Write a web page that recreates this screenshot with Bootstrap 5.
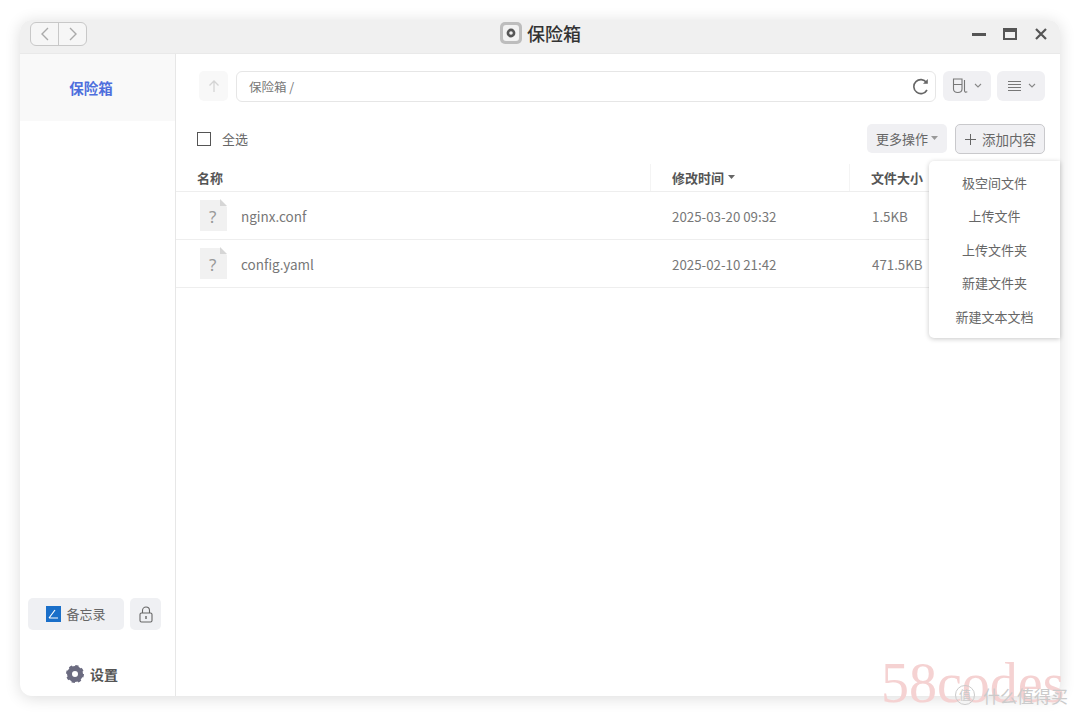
<!DOCTYPE html>
<html lang="zh">
<head>
<meta charset="utf-8">
<title>保险箱</title>
<link rel="stylesheet" href="https://cdn.jsdelivr.net/npm/bootstrap@5.3.0/dist/css/bootstrap.min.css">
<style>
html,body{height:100%;margin:0;background:#fff;overflow:hidden}
body{font-family:"Noto Sans CJK SC","Noto Sans",sans-serif;font-size:13px;color:#666;padding:20px}
.win{width:1040px;height:676px;border-radius:12px;background:#fff;box-shadow:0 2px 16px rgba(0,0,0,.14);position:relative}
.tbar{height:34px;background:#f0f0f0;border-radius:12px 12px 0 0;border-bottom:1px solid #e9e9e9;padding:0 11px 6px 10px}
.navpair{width:57px;height:24px;border:1px solid #c8c8c8;border-radius:6px;background:#f6f6f6}
.navpair>span{flex:1 1 0}
.navpair>span+span{border-left:1px solid #c8c8c8}
.ttl{position:absolute;left:480px;top:1px;height:24px;font-size:18px;font-weight:500;color:#333;gap:5px;line-height:22px}
.ctrls{gap:17px;padding-right:1px}
.mainrow{height:642px}
.side{width:156px;border-right:1px solid #e7e7e7;border-radius:0 0 0 12px}
.sactive{height:67px;background:#f9f9f9;color:#4e6fdd;font-size:14.500px;font-weight:700;padding-right:13px}
.memo{width:96px;height:32px;background:#eff0f3;border-radius:5px;gap:5px;color:#666;font-size:13px}
.lockb{width:31px;height:32px;background:#eff0f3;border-radius:5px}
.memorow{gap:6px;padding:0 8px 24px}
.sfoot{height:42px;gap:6px;font-weight:700;color:#555;font-size:14px;padding-right:11px;padding-bottom:2px}
.tool1{padding:17px 15px 0 23px;gap:8px;height:49px}
.upb{width:29px;height:30px;background:#f8f8f8;border-radius:5px}
.pathb{height:31px;border:1px solid #e6e6e6;border-radius:6px;padding:0 6px 0 12px;color:#777;font-size:12.500px;margin-right:-1px}
.pathtxt{padding-top:2px}
.vbtn{width:48px;height:30px;background:#f0f0f3;border-radius:6px;gap:6px}
.vbtn+.vbtn{margin-left:-2px}
.tool2{height:34px;padding:21px 15px 0 21px;box-sizing:content-box}
.selall{height:29px}
.chk{width:14px;height:14px;border:1.200px solid #555;margin-right:11px;margin-top:1px}
.act1{width:80px;height:29px;background:#f0f0f3;border-radius:5px;font-size:13px;color:#666;margin-right:8px;gap:3px}
.act2{width:90px;height:30px;background:#f0f0f3;border:1px solid #c9c9cc;border-radius:5px;font-size:13.500px;color:#666;gap:5px}
.thead{height:23px;font-size:13px;font-weight:700;color:#555;border-bottom:1px solid #eee;margin-top:11px}
.thead>div{height:27px;display:flex;align-items:center;flex:none}
.thead>.c2{width:199px}
.frow{height:48px;border-bottom:1px solid #eee;color:#777;font-size:13.500px}
.c1{width:474px;padding-left:21px}
.c2{width:200px;padding-left:22px}
.c3{padding-left:22px}
.thead>.sep{border-left:1px solid #f4f4f4;padding-left:21px}
.ftime{font-size:13.300px;padding-top:2px}
.fname{gap:14px}
.fname>span{padding-top:2px}
.fico{margin-top:-2px}
.addmenu{position:absolute;left:909px;top:141px;width:131px;height:177px;background:#fff;border-radius:5px 0 0 5px;box-shadow:0 1px 5px rgba(0,0,0,.22);padding:5px 0 4px;color:#666;font-size:13px}
.addmenu>div{height:33.400px}
.wm58{position:absolute;left:861px;top:635px;font-family:"Liberation Serif",serif;font-size:56px;line-height:1;color:#f5d2d2;white-space:nowrap}
.wmz{position:absolute;left:935px;top:665px;font-size:17px;line-height:1;color:#cbcbcb;white-space:nowrap;gap:8px}
.wmc{width:20px;height:20px;border:1px solid #cbcbcb;border-radius:50%;font-size:12px}
</style>
</head>
<body>
<div class="win">
  <div class="tbar d-flex align-items-center justify-content-between">
    <div class="navpair d-flex">
      <span class="d-flex align-items-center justify-content-center"><svg width="10" height="16" viewBox="0 0 10 16"><path d="M8 2 2 8l6 6" fill="none" stroke="#aaa" stroke-width="1.400"/></svg></span>
      <span class="d-flex align-items-center justify-content-center"><svg width="10" height="16" viewBox="0 0 10 16"><path d="m2 2 6 6-6 6" fill="none" stroke="#aaa" stroke-width="1.400"/></svg></span>
    </div>
    <div class="ttl d-flex align-items-center">
      <svg width="22" height="22" viewBox="0 0 22 22"><rect x="0" y="0" width="22" height="22" rx="5" fill="#bdbdbd"/><rect x="3" y="3" width="16" height="16" rx="3" fill="#f2f2f2"/><circle cx="11" cy="11" r="4.400" fill="#555"/><circle cx="11" cy="11" r="1.800" fill="#eee"/></svg>
      <span>保险箱</span>
    </div>
    <div class="ctrls d-flex align-items-center">
      <svg width="14" height="14" viewBox="0 0 14 14"><rect x="0" y="6" width="14" height="3" fill="#555"/></svg>
      <svg width="14" height="14" viewBox="0 0 14 14"><rect x="1" y="2" width="12" height="10" fill="none" stroke="#555" stroke-width="2"/><rect x="1" y="2" width="12" height="3" fill="#555"/></svg>
      <svg width="14" height="14" viewBox="0 0 14 14"><path d="m2 2 10 10M12 2 2 12" stroke="#555" stroke-width="2.200"/></svg>
    </div>
  </div>
  <div class="mainrow d-flex">
    <aside class="side d-flex flex-column">
      <div class="sactive d-flex align-items-center justify-content-center">保险箱</div>
      <div class="flex-grow-1"></div>
      <div class="memorow d-flex">
        <div class="memo d-flex align-items-center justify-content-center">
          <svg width="15" height="16" viewBox="0 0 15 16"><rect width="15" height="16" fill="#1a6fc9"/><path d="M3 12 9 4M3 12h9" stroke="#fff" stroke-width="1.200" fill="none"/></svg>
          <span>备忘录</span>
        </div>
        <div class="lockb d-flex align-items-center justify-content-center">
          <svg width="14" height="17" viewBox="0 0 14 17"><rect x="1" y="7" width="12" height="9" rx="1.500" fill="none" stroke="#666" stroke-width="1.100"/><path d="M3.500 7V4.500a3.500 3.500 0 0 1 7 0V7" fill="none" stroke="#666" stroke-width="1.100"/><rect x="6.300" y="10" width="1.400" height="3" fill="#666"/></svg>
        </div>
      </div>
      <div class="sfoot d-flex align-items-center justify-content-center">
        <svg width="18" height="18" viewBox="0 0 18 18"><circle cx="9" cy="9" r="5.500" fill="none" stroke="#6b6b80" stroke-width="5"/><circle cx="9" cy="9" r="7.800" fill="none" stroke="#6b6b80" stroke-width="2.400" stroke-dasharray="3.200 2.926"/></svg>
        <span>设置</span>
      </div>
    </aside>
    <main class="flex-grow-1 d-flex flex-column">
      <div class="tool1 d-flex align-items-start">
        <div class="upb d-flex align-items-center justify-content-center">
          <svg width="14" height="14" viewBox="0 0 14 14"><path d="M7 13V2M2.500 6.500 7 2l4.500 4.500" fill="none" stroke="#d4d4d4" stroke-width="1.300"/></svg>
        </div>
        <div class="pathb flex-grow-1 d-flex align-items-center justify-content-between">
          <span class="pathtxt">保险箱 /</span>
          <svg width="17" height="17" viewBox="0 0 17 17"><path d="M14.500 4.500A7 7 0 1 0 15 12" fill="none" stroke="#666" stroke-width="1.600"/><path d="M15.800 1v4.800H11z" fill="#666"/></svg>
        </div>
        <div class="vbtn d-flex align-items-center justify-content-center">
          <svg width="16" height="16" viewBox="0 0 16 16"><path d="M1.500 1h8.500V11c0 2.500-1.500 3.500-4.200 3.500S1.500 13.500 1.500 11zM1.500 6.500H10M12.500 2v10.500c0 1.500.8 2 2.800 1.300" fill="none" stroke="#777" stroke-width="1.100"/></svg>
          <svg width="8" height="6" viewBox="0 0 8 6"><path d="m1 1 3 3 3-3" fill="none" stroke="#888" stroke-width="1.100"/></svg>
        </div>
        <div class="vbtn d-flex align-items-center justify-content-center">
          <svg width="15" height="12" viewBox="0 0 15 12"><path d="M1 1.500h13M1 4.500h13M1 7.500h13M1 10.500h13" stroke="#777" stroke-width="1"/></svg>
          <svg width="8" height="6" viewBox="0 0 8 6"><path d="m1 1 3 3 3-3" fill="none" stroke="#888" stroke-width="1.100"/></svg>
        </div>
      </div>
      <div class="tool2 d-flex align-items-start">
        <div class="selall d-flex align-items-center flex-grow-1">
          <span class="chk"></span><span>全选</span>
        </div>
        <div class="act1 d-flex align-items-center justify-content-center">更多操作<svg width="7" height="5" viewBox="0 0 7 5"><path d="M0 0h7L3.500 4z" fill="#999"/></svg></div>
        <div class="act2 d-flex align-items-center justify-content-center">
          <svg width="13" height="13" viewBox="0 0 13 13"><path d="M6.500 1v11M1 6.500h11" stroke="#666" stroke-width="1"/></svg>
          <span>添加内容</span>
        </div>
      </div>
      <div class="thead d-flex align-items-end">
        <div class="c1">名称</div>
        <div class="c2 sep gap-1">修改时间<svg width="7" height="5" viewBox="0 0 7 5"><path d="M0 0h7L3.500 4z" fill="#666"/></svg></div>
        <div class="c3 sep">文件大小</div>
      </div>
      <div class="frow d-flex align-items-center">
        <div class="c1 ps-4 fname d-flex align-items-center">
          <svg class="fico" width="27" height="32" viewBox="0 0 27 32"><path d="M0 1h20l7 7v24H0z" fill="#f1f1f1"/><path d="M20 0l7 7h-7z" fill="#d6d6d6"/><text x="9" y="24" font-size="17" fill="#999" font-family="Noto Sans">?</text></svg>
          <span>nginx.conf</span>
        </div>
        <div class="c2 ftime">2025-03-20 09:32</div>
        <div class="c3 ftime">1.5KB</div>
      </div>
      <div class="frow d-flex align-items-center">
        <div class="c1 ps-4 fname d-flex align-items-center">
          <svg class="fico" width="27" height="32" viewBox="0 0 27 32"><path d="M0 1h20l7 7v24H0z" fill="#f1f1f1"/><path d="M20 0l7 7h-7z" fill="#d6d6d6"/><text x="9" y="24" font-size="17" fill="#999" font-family="Noto Sans">?</text></svg>
          <span>config.yaml</span>
        </div>
        <div class="c2 ftime">2025-02-10 21:42</div>
        <div class="c3 ftime">471.5KB</div>
      </div>
    </main>
  </div>
  <div class="addmenu">
    <div class="d-flex align-items-center justify-content-center">极空间文件</div>
    <div class="d-flex align-items-center justify-content-center">上传文件</div>
    <div class="d-flex align-items-center justify-content-center">上传文件夹</div>
    <div class="d-flex align-items-center justify-content-center">新建文件夹</div>
    <div class="d-flex align-items-center justify-content-center">新建文本文档</div>
  </div>
  <div class="wm58">58codes</div>
  <div class="wmz d-flex align-items-center"><span class="wmc d-flex align-items-center justify-content-center">值</span><span>什么值得买</span></div>
</div>
<script src="https://cdn.jsdelivr.net/npm/bootstrap@5.3.0/dist/js/bootstrap.bundle.min.js"></script>
</body>
</html>
